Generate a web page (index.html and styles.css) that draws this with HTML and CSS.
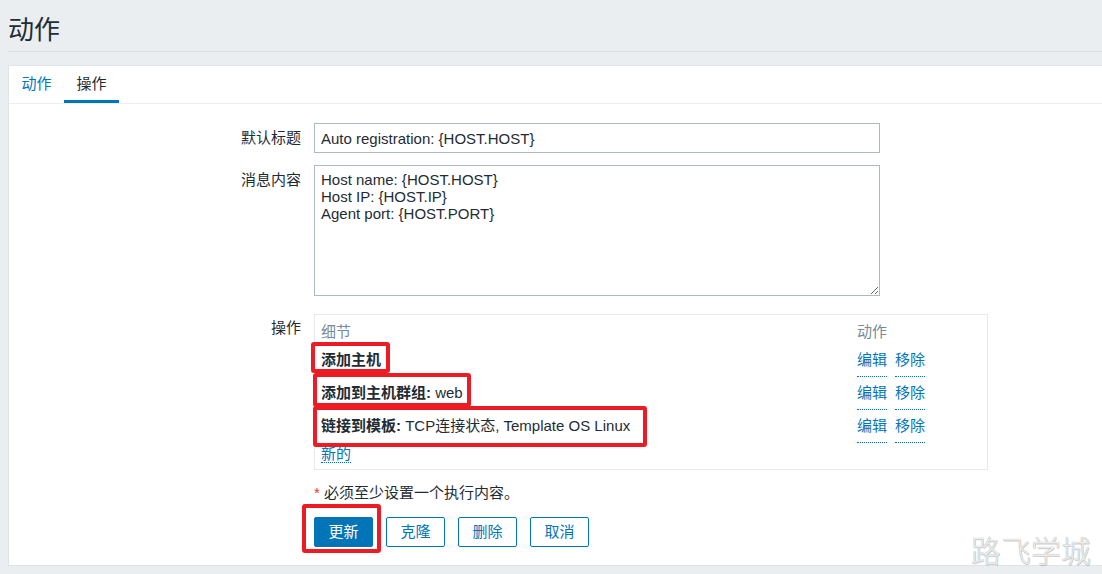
FILE: index.html
```html
<!DOCTYPE html>
<html lang="zh-CN">
<head>
<meta charset="utf-8">
<title>动作</title>
<link rel="stylesheet" href="styles.css">
</head>
<body>
<div class="page">
  <header class="page-header">
    <h1 class="page-title">动作</h1>
  </header>
  <main class="panel">
    <nav class="tabs">
      <a class="tab">动作</a>
      <a class="tab tab-active">操作</a>
    </nav>
    <form class="form">
      <label class="form-label">默认标题</label>
      <div class="form-field">
        <input class="text-input" type="text" value="Auto registration: {HOST.HOST}">
      </div>

      <label class="form-label">消息内容</label>
      <div class="form-field">
        <textarea class="text-area">Host name: {HOST.HOST}
Host IP: {HOST.IP}
Agent port: {HOST.PORT}</textarea>
      </div>

      <label class="form-label form-label-ops">操作</label>
      <div class="form-field form-field-ops">
        <div class="ops">
          <div class="ops-head">细节</div>
          <div class="ops-head">动作</div>

          <div class="ops-cell"><b>添加主机</b></div>
          <div class="ops-cell ops-actions"><a class="link">编辑</a><a class="link">移除</a></div>

          <div class="ops-cell"><b>添加到主机群组:</b> web</div>
          <div class="ops-cell ops-actions"><a class="link">编辑</a><a class="link">移除</a></div>

          <div class="ops-cell"><b>链接到模板:</b> TCP连接状态, Template OS Linux</div>
          <div class="ops-cell ops-actions"><a class="link">编辑</a><a class="link">移除</a></div>

          <div class="ops-new"><a class="link">新的</a></div>
        </div>
      </div>

      <div class="form-spacer"></div>
      <div class="form-field note"><span class="req">*</span> 必须至少设置一个执行内容。</div>

      <div class="form-spacer"></div>
      <div class="form-field buttons">
        <button type="button" class="btn btn-primary">更新</button>
        <button type="button" class="btn">克隆</button>
        <button type="button" class="btn">删除</button>
        <button type="button" class="btn">取消</button>
      </div>
    </form>
  </main>
</div>

<div class="mark mark-1"></div>
<div class="mark mark-2"></div>
<div class="mark mark-3"></div>
<div class="mark mark-4"></div>

<div class="watermark">路飞学城</div>
</body>
</html>
```

FILE: styles.css
```css
* {
  box-sizing: border-box;
}

html, body {
  margin: 0;
  padding: 0;
}

body {
  position: relative;
  width: 1102px;
  height: 574px;
  overflow: hidden;
  background: #ebeef0;
  color: #1f2c33;
  font-family: "Liberation Sans", "Noto Sans CJK SC", sans-serif;
  font-size: 15px;
  line-height: 18px;
}

.page {
  padding-left: 8px;
}

.page-header {
  padding: 15px 0 6px;
  border-bottom: 1px solid #dadfe3;
}

.page-title {
  margin: 0;
  font-size: 26px;
  line-height: 30px;
  font-weight: normal;
  color: #1f2c33;
}

.panel {
  margin-top: 13px;
  background: #ffffff;
  border: 1px solid #dfe4e7;
  border-right: none;
  height: 501px;
}

.tabs {
  display: flex;
  border-bottom: 1px solid #ebeef0;
}

.tab {
  display: block;
  height: 37px;
  padding: 2px 12.5px 0;
  line-height: 32px;
  color: #0275b8;
  border-bottom: 3px solid transparent;
}

.tab-active {
  color: #1f2c33;
  border-bottom-color: #0275b8;
}

.form {
  display: grid;
  grid-template-columns: 292px 1fr;
  column-gap: 13px;
  row-gap: 12px;
  padding: 19px 0 18px;
  margin: 0;
}

.form-label {
  text-align: right;
  padding-top: 6px;
  line-height: 18px;
}

.form-label-ops {
  margin-top: 6px;
  padding-top: 5px;
}

.text-input {
  display: block;
  width: 566px;
  height: 30px;
  margin: 0;
  padding: 0 6px;
  border: 1px solid #acbbc2;
  border-radius: 0;
  background: #ffffff;
  color: #1f2c33;
  font-family: "Liberation Sans", "Noto Sans CJK SC", sans-serif;
  font-size: 15px;
  outline: none;
}

.text-area {
  display: block;
  width: 566px;
  height: 131px;
  margin: 0;
  padding: 5px 6px;
  border: 1px solid #acbbc2;
  border-radius: 0;
  background: #ffffff;
  color: #1f2c33;
  font-family: "Liberation Sans", "Noto Sans CJK SC", sans-serif;
  font-size: 15px;
  line-height: 17px;
  outline: none;
}

.form-field-ops {
  margin-top: 6px;
}

.ops {
  display: grid;
  grid-template-columns: 1fr 130px;
  width: 674px;
  padding: 0 0 4px 6px;
  border: 1px solid #e6e9eb;
}

.ops-head {
  height: 29px;
  padding-top: 8px;
  line-height: 18px;
  color: #768d99;
}

.ops-cell {
  height: 33px;
  line-height: 32px;
  white-space: nowrap;
}

.ops-cell b {
  font-weight: bold;
}

.ops-actions {
  display: flex;
  gap: 8px;
}

.ops-new {
  grid-column: 1 / -1;
  height: 22px;
  line-height: 22px;
}

.link {
  color: #0275b8;
  border-bottom: 1px dotted #0275b8;
  cursor: pointer;
}

.note {
  padding-top: 2px;
  line-height: 18px;
}

.req {
  color: #e33734;
}

.buttons {
  display: flex;
  gap: 13px;
  margin-top: 3px;
}

.btn {
  height: 30px;
  margin: 0;
  padding: 0 13.5px;
  border: 1px solid #0275b8;
  border-radius: 2px;
  background: #ffffff;
  color: #0275b8;
  font-family: "Liberation Sans", "Noto Sans CJK SC", sans-serif;
  font-size: 15px;
  line-height: 28px;
}

.btn-primary {
  background: #0275b8;
  color: #ffffff;
}

/* red annotation rectangles drawn over the screenshot */
.mark {
  position: absolute;
  border: 4px solid #ed1c24;
  border-radius: 3px;
  pointer-events: none;
}

.mark-1 {
  left: 311px;
  top: 342px;
  width: 79px;
  height: 31px;
}

.mark-2 {
  left: 313px;
  top: 373px;
  width: 158px;
  height: 34px;
}

.mark-3 {
  left: 313px;
  top: 406px;
  width: 334px;
  height: 41px;
}

.mark-4 {
  left: 302px;
  top: 504px;
  width: 79px;
  height: 49px;
}

.watermark {
  position: absolute;
  left: 971px;
  top: 534px;
  font-family: "Noto Sans CJK SC", sans-serif;
  font-size: 30px;
  line-height: 30px;
  font-weight: 300;
  color: #ececec;
  text-shadow: 0 0 1px #9a9a9a, 0.5px 0.5px 0 rgba(0, 0, 0, 0.18);
  white-space: nowrap;
}
```
